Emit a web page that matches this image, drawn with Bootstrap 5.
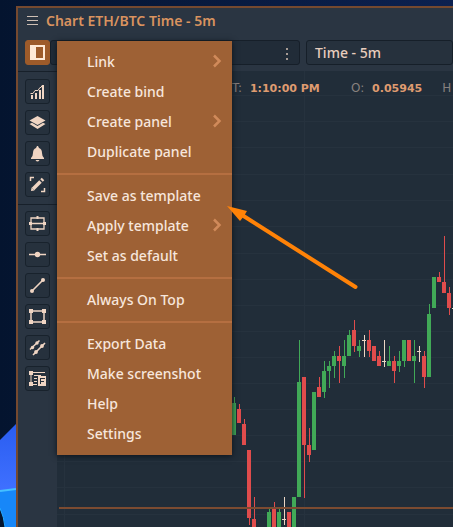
<!DOCTYPE html>
<html lang="en">
<head>
<meta charset="utf-8">
<meta name="viewport" content="width=device-width, initial-scale=1">
<title>Chart ETH/BTC Time - 5m</title>
<link rel="stylesheet" href="https://cdn.jsdelivr.net/npm/bootstrap@5.3.0/dist/css/bootstrap.min.css">
<style>
  body { font-family: "Noto Sans", "Open Sans", sans-serif; font-size: 14px; background: linear-gradient(90deg, #04142f, #0c2150); color: #e8cdbd; }
  .wallpaper { left: 0; bottom: 0; z-index: -1; }
  .chart-window { margin: 6px 0 0 16px; border: solid #75492f; border-width: 2px 0 0 2px; background: #2a3542; }
  .title-bar { height: 30px; padding: 1px 9px 0; gap: 8px; line-height: 24px; }
  .title-text { color: #d9935f; font-weight: 600; }
  .top-tools { height: 33px; padding: 2px 0 0 7px; }
  .tool { width: 25px; height: 25px; padding: 0; border: 1px solid #18222c; border-radius: 3px; background: #26313d; color: #f0d5c3; display: flex; align-items: center; justify-content: center; }
  .tool.selected { background: #9e5b2a; border-color: #9e5b2a; }
  .field { height: 25px; border: 1px solid #161f29; border-radius: 3px; background: #212c38; color: #e8cdbd; font-weight: 500; line-height: 20px; padding: 0 8px; text-align: left; }
  .symbol-field { width: 250px; text-align: right; }
  .time-field { margin-left: 6px; background: #26313d; }
  .side-tools { width: 39px; padding: 7px; gap: 6px; border-top: 1px solid #17202a; }
  .side-rule { height: 1px; margin: 1px -7px 0; background: #17202a; }
  .plot { background: #212d39; overflow: hidden; }
  .quote { left: 175px; top: 8px; font: 12px/18px "DejaVu Sans", sans-serif; color: #87807e; gap: 20px; }
  .quote b { color: #df9b70; font-size: 11px; margin-left: 4px; }
  .quote-time { min-width: 99px; }
  .panel-menu { left: 57px; top: 41px; width: 175px; padding: 6px 0; background: #9e6135; box-shadow: 0 1px 6px #0c131b; z-index: 5; }
  .panel-menu button { height: 30px; width: 100%; padding: 0 9px 2px 30px; border: 0; background: none; color: #f7e6dc; font-weight: 500; text-align: left; }
  .panel-menu hr { margin: 6px 0; border: 0; height: 2px; background: #b56f41; opacity: 1; }
  .pointer-arrow { left: 226px; top: 200px; z-index: 6; pointer-events: none; }
</style>
<script src="https://cdn.jsdelivr.net/npm/bootstrap@5.3.0/dist/js/bootstrap.bundle.min.js"></script>
</head>
<body class="overflow-hidden d-flex flex-column vh-100">
<svg class="wallpaper position-absolute" width="24" height="110" viewBox="0 417 24 110" aria-hidden="true">
  <defs><linearGradient id="bloom" x1="0" y1="0" x2="0" y2="1"><stop offset="0" stop-color="#2a5df0"/><stop offset="1" stop-color="#3f70ff"/></linearGradient></defs>
  <path fill="url(#bloom)" d="M0 440 16 424V490H0z"/><path fill="#1787f8" d="M0 490H16V527H5Q4 517 0 509z"/><path stroke="#45c0ff" stroke-width="2" d="M0 491 16 489"/><path fill="none" stroke="#24a7ff" d="M0 508Q4 517 5 527"/>
</svg>
<main class="chart-window flex-grow-1 d-flex flex-column">
  <header class="title-bar d-flex">
    <svg width="11" height="24" viewBox="0 0 11 24" fill="none" stroke="#cfc0b5" stroke-width="1" aria-hidden="true"><path d="M0 7.500H11M0 11.500H11M0 15.500H11"/></svg>
    <span class="title-text">Chart ETH/BTC Time - 5m</span>
  </header>
  <div class="top-tools d-flex">
    <button class="tool selected flex-shrink-0" aria-label="Panel menu" aria-expanded="true"><svg width="17" height="17" viewBox="0 0 17 17"><path fill="#ffe9d5" fill-rule="evenodd" d="M1 1H16V16H1zM7 3V14H14V3z"/></svg></button>
    <button class="field symbol-field flex-shrink-0" aria-label="Symbol options"><svg width="5" height="14" viewBox="0 0 5 14" fill="#a69b94"><path d="M0 1h2v2H0zM0 6h2v2H0zM0 11h2v2H0z"/></svg></button>
    <button class="field time-field flex-grow-1">Time - 5m</button>
  </div>
  <div class="d-flex flex-grow-1 overflow-hidden">
    <nav class="side-tools d-flex flex-column flex-shrink-0" aria-label="Drawing tools">
      <button class="tool" aria-label="Indicators"><svg width="17" height="17" viewBox="0 0 17 17"><path fill="currentColor" d="M2 12h2v4H2zM6 10h2v6H6zM10 7h2v9h-2zM13 3h2v13h-2z"/><path d="M1.500 10.500H4L6 7.500H9L11 4.500H12L13 2.500H15" fill="none" stroke="currentColor"/></svg></button>
      <button class="tool" aria-label="Layers"><svg width="17" height="17" viewBox="0 0 17 17" fill="currentColor"><path d="M8.500 2 16.500 6.500 8.500 11 .5 6.500zM.5 10 3 8.800 8.500 12 14 8.800 16.500 10 8.500 15z"/></svg></button>
      <button class="tool" aria-label="Alerts"><svg width="17" height="17" viewBox="0 0 17 17" fill="currentColor"><path d="M8 1h1l1 2q3 1 3 5 0 3 2 5v1H2v-1q2-2 2-5 0-4 3-5zM6.500 15h4q-2 3-4 0z"/></svg></button>
      <button class="tool" aria-label="Draw"><svg width="17" height="17" viewBox="0 0 17 17" fill="none" stroke="currentColor"><path d="M1.500 5V1.500H5M12 15.500H15.500V12" stroke-width="1.500"/><path d="M4 13 11.500 5.500" stroke-width="3.500"/><path d="M12.500 4.500 14 3" stroke-width="3.500"/><path fill="currentColor" stroke="none" d="M2 15 2.500 11.500 5.500 14.500z"/></svg></button>
      <div class="side-rule"></div>
      <button class="tool" aria-label="Range"><svg width="19" height="17" viewBox="0 0 19 17" fill="none" stroke="currentColor"><path stroke-width="1.300" d="M3 3H16V14H3zM1 8.500H18"/><path fill="currentColor" stroke="none" d="M8.500 1h2v3h-2zM8.500 13h2v3h-2zM1 7h3v3H1zM15 7h3v3h-3z"/></svg></button>
      <button class="tool" aria-label="Horizontal line"><svg width="19" height="17" viewBox="0 0 19 17"><path stroke="currentColor" stroke-width="1.500" d="M1 8.500H18"/><circle cx="9.500" cy="8.500" r="2.700" fill="currentColor"/></svg></button>
      <button class="tool" aria-label="Trend line"><svg width="17" height="17" viewBox="0 0 17 17"><path stroke="currentColor" stroke-width="1.600" d="M3 14 14 3"/><circle cx="3" cy="14" r="2" fill="currentColor"/><circle cx="14" cy="3" r="2" fill="currentColor"/></svg></button>
      <button class="tool" aria-label="Rectangle"><svg width="19" height="17" viewBox="0 0 19 17"><path fill="none" stroke="currentColor" stroke-width="1.500" d="M3 3H16V14H3z"/><path fill="currentColor" d="M1 1h4v4H1zM14 1h4v4h-4zM1 12h4v4H1zM14 12h4v4h-4z"/></svg></button>
      <button class="tool" aria-label="Channel"><svg width="17" height="17" viewBox="0 0 17 17"><path stroke="currentColor" stroke-width="1.600" d="M1 10.500 10.500 1.500M4 16 16 4"/><circle cx="3.500" cy="8.500" r="1.700" fill="currentColor"/><circle cx="8" cy="4" r="1.700" fill="currentColor"/><circle cx="7" cy="13" r="1.900" fill="currentColor"/><circle cx="13" cy="7" r="1.900" fill="currentColor"/></svg></button>
      <button class="tool" aria-label="Volume profile"><svg width="19" height="17" viewBox="0 0 19 17" fill="currentColor"><path d="M1 1h4v4H1zM1 12h4v4H1zM2.500 4h1v9h-1zM5 2h12v1H5zM6 5h7v1H6zM6 8h3v1H6zM6 11h3v1H6zM5 14h4v1H5z"/><path fill-rule="evenodd" d="M10 6h8v10h-8zM12 8v6h1v-2h3v-1h-3V9h4V8z"/></svg></button>
    </nav>
    <section class="plot position-relative flex-grow-1" aria-label="ETH/BTC chart">
      <svg id="candles" class="d-block" width="396" height="456" viewBox="57 71 396 456" preserveAspectRatio="xMinYMin" shape-rendering="crispEdges">
        <path fill="none" stroke="#26323e" d="M64.500 71V527M304.500 71V527M57 95.500H453M57 121.500H453M57 147.500H453M57 174.500H453M57 200.500H453M57 226.500H453M57 253.500H453M57 279.500H453M57 305.500H453M57 331.500H453M57 357.500H453M57 383.500H453M57 409.500H453M57 435.500H453M57 461.500H453M57 487.500H453M57 514.500H453"/>
      </svg>
      <div class="quote position-absolute d-flex text-nowrap">
        <span class="quote-time">T: <b>1:10:00 PM</b></span><span>O: <b>0.05945</b></span><span>H</span>
      </div>
    </section>
  </div>
</main>
<div class="panel-menu position-absolute" role="menu">
  <button role="menuitem" class="d-flex align-items-center justify-content-between">Link <svg width="12" height="14" viewBox="0 0 12 14" fill="none" stroke="#d08a5a" stroke-width="2.500"><path d="M3 1.500 8.500 7 3 12.500"/></svg></button>
  <button role="menuitem">Create bind</button>
  <button role="menuitem" class="d-flex align-items-center justify-content-between">Create panel <svg width="12" height="14" viewBox="0 0 12 14" fill="none" stroke="#d08a5a" stroke-width="2.500"><path d="M3 1.500 8.500 7 3 12.500"/></svg></button>
  <button role="menuitem">Duplicate panel</button>
  <hr>
  <button role="menuitem">Save as template</button>
  <button role="menuitem" class="d-flex align-items-center justify-content-between">Apply template <svg width="12" height="14" viewBox="0 0 12 14" fill="none" stroke="#d08a5a" stroke-width="2.500"><path d="M3 1.500 8.500 7 3 12.500"/></svg></button>
  <button role="menuitem">Set as default</button>
  <hr>
  <button role="menuitem">Always On Top</button>
  <hr>
  <button role="menuitem">Export Data</button>
  <button role="menuitem">Make screenshot</button>
  <button role="menuitem">Help</button>
  <button role="menuitem">Settings</button>
</div>
<svg class="pointer-arrow position-absolute" width="136" height="94" viewBox="226 200 136 94" aria-hidden="true"><path stroke="#ff8207" stroke-width="4" stroke-linecap="round" d="M242 215 355.500 287"/><path fill="#ff8207" d="M227 206 247 211 244 216 240 221z"/></svg>
<script>
  // Each candle: centre x, body top, body bottom, wick top, wick bottom, kind (g up, r down, w flat).
  const candles = [
    [234,403,435,397,435,'g'],[239,409,423,404,423,'r'],[244,424,445,419,445,'r'],[249,450,518,450,525,'r'],
    [254,519,527,497,527,'r'],[269,512,527,508,527,'g'],[274,508,527,502,527,'r'],[279,512,527,508,527,'g'],
    [284,519,520,497,525,'w'],[289,512,527,512,527,'r'],[294,497,527,497,527,'g'],[299,382,497,340,497,'g'],
    [304,377,445,377,498,'r'],[309,445,455,428,462,'r'],[314,392,450,392,450,'g'],[319,387,397,377,397,'r'],
    [324,371,392,361,398,'g'],[329,366,371,361,388,'g'],[334,356,366,351,378,'g'],[339,356,361,346,383,'r'],
    [344,356,366,340,378,'g'],[349,335,356,330,356,'g'],[354,330,346,320,352,'r'],[359,346,351,340,357,'g'],
    [364,340,341,335,357,'w'],[369,340,351,330,357,'r'],[374,346,361,346,361,'r'],[379,356,366,351,366,'r'],
    [384,361,362,340,367,'w'],[389,361,366,346,366,'g'],[394,361,371,356,383,'r'],[399,361,366,351,372,'g'],
    [404,340,361,340,367,'g'],[409,340,361,340,361,'r'],[414,356,361,340,383,'g'],[419,351,352,346,362,'w'],
    [424,356,377,351,388,'r'],[429,314,377,304,377,'g'],[434,277,308,277,308,'g'],[439,277,282,272,282,'r'],
    [444,282,293,236,293,'r'],[449,293,308,287,315,'r'],[454,308,309,300,315,'w']
  ];
  const fill = { g: '#41a957', r: '#e04c4c', w: '#ecd7c5' };
  const plot = document.getElementById('candles');
  function bar(x, y, w, h, color) {
    const r = document.createElementNS('http://www.w3.org/2000/svg', 'rect');
    for (const [k, v] of Object.entries({ x, y, width: w, height: h, fill: color })) r.setAttribute(k, v);
    plot.append(r);
  }
  for (const [x, top, bottom, high, low, kind] of candles) {
    bar(x, high, 1, low - high, fill[kind]);
    bar(x - 2, top, 4, bottom - top, fill[kind]);
  }
  bar(59, 507, 394, 2, '#7c4b31');
</script>
</body>
</html>
